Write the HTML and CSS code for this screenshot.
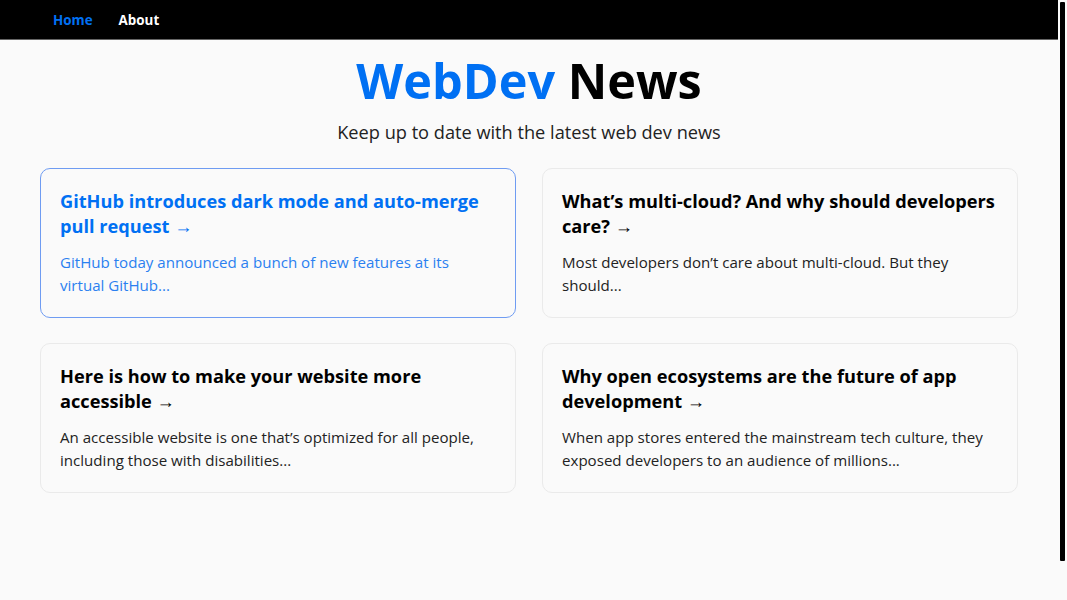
FILE: index.html
```html
<!DOCTYPE html>
<html lang="en">
<head>
<meta charset="utf-8">
<title>WebDev News</title>
<link rel="stylesheet" href="styles.css">
</head>
<body>
<div class="page">
  <nav class="nav">
    <a class="nav-link active" href="#">Home</a>
    <a class="nav-link" href="#">About</a>
  </nav>
  <main class="main">
    <h1 class="title"><span class="accent">WebDev</span> News</h1>
    <p class="description">Keep up to date with the latest web dev news</p>
    <div class="grid">
      <a class="card hover" href="#">
        <h3>GitHub introduces dark mode and auto-merge pull request&nbsp;&rarr;</h3>
        <p>GitHub today announced a bunch of new features at its virtual GitHub...</p>
      </a>
      <a class="card" href="#">
        <h3>What’s multi-cloud? And why should developers care?&nbsp;&rarr;</h3>
        <p>Most developers don’t care about multi-cloud. But they should...</p>
      </a>
      <a class="card" href="#">
        <h3>Here is how to make your website more accessible&nbsp;&rarr;</h3>
        <p>An accessible website is one that’s optimized for all people, including those with disabilities...</p>
      </a>
      <a class="card" href="#">
        <h3>Why open ecosystems are the future of app development&nbsp;&rarr;</h3>
        <p>When app stores entered the mainstream tech culture, they exposed developers to an audience of millions...</p>
      </a>
    </div>
  </main>
</div>
<div class="scroll-thumb" aria-hidden="true"></div>
</body>
</html>
```
FILE: styles.css
```css
html, body {
  margin: 0;
  padding: 0;
  background: #fafafa;
  font-family: "Open Sans", "Noto Sans", sans-serif;
  overflow: hidden;
}
* { box-sizing: border-box; }
.page {
  width: calc(100% - 9px);
}
.scroll-thumb {
  position: fixed;
  top: 2px;
  right: 2px;
  width: 5px;
  height: 559px;
  background: #000;
  border-radius: 1px;
}
.nav {
  height: 40px;
  background: #000;
  border-bottom: 1px solid #666;
  display: flex;
  align-items: center;
  gap: 26px;
  padding: 0 0 0 53px;
}
.nav-link {
  color: #fff;
  font-weight: 700;
  font-size: 13.4px;
  text-decoration: none;
}
.nav-link.active { color: #0070f3; }
.main {
  padding: 12px 40px 40px 40px;
  display: flex;
  flex-direction: column;
  align-items: center;
}
.title {
  margin: 0;
  font-size: 48.6px;
  line-height: 57px;
  font-weight: 700;
  color: #000;
  text-align: center;
}
.accent { color: #0070f3; }
.description {
  margin: 9px 0 0;
  font-size: 18.2px;
  line-height: 29px;
  color: #222;
  text-align: center;
}
.grid {
  margin-top: 21px;
  width: 100%;
  display: grid;
  grid-template-columns: 1fr 1fr;
  column-gap: 26px;
  row-gap: 25px;
}
.card {
  display: block;
  height: 150px;
  padding: 20px 19px;
  border: 1px solid #eaeaea;
  border-radius: 10px;
  color: #000;
  text-decoration: none;
}
.card h3 {
  margin: 0 0 12px;
  font-size: 18.2px;
  line-height: 25px;
  font-weight: 700;
}
.card p {
  margin: 0;
  font-size: 15.1px;
  line-height: 23px;
  color: #222;
}
.card.hover {
  border-color: #6f9cf2;
  color: #0070f3;
}
.card.hover p { color: #2a80f0; }
```
